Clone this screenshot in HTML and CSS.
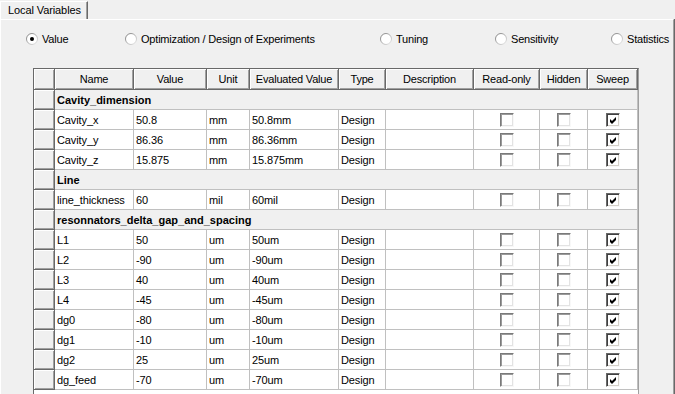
FILE: index.html
```html
<!DOCTYPE html>
<html>
<head>
<meta charset="utf-8">
<link rel="stylesheet" href="styles.css">
</head>
<body>
<div class="tabs"><div class="tab">Local Variables</div></div>
<div class="panel">
  <div class="radios">
    <label class="radio"><svg class="rb" width="12" height="12" viewBox="0 0 12 12"><defs><linearGradient id="rg" x1="0" y1="0" x2="1" y2="1"><stop offset="0" stop-color="#7a7a7a"/><stop offset="1" stop-color="#e8e8e8"/></linearGradient></defs><circle cx="6" cy="6" r="5.5" fill="#fff" stroke="url(#rg)"/><circle cx="6" cy="6" r="2" fill="#000"/></svg>Value</label>
    <label class="radio"><svg class="rb" width="12" height="12" viewBox="0 0 12 12"><circle cx="6" cy="6" r="5.5" fill="#fff" stroke="url(#rg)"/></svg>Optimization / Design of Experiments</label>
    <label class="radio"><svg class="rb" width="12" height="12" viewBox="0 0 12 12"><circle cx="6" cy="6" r="5.5" fill="#fff" stroke="url(#rg)"/></svg>Tuning</label>
    <label class="radio"><svg class="rb" width="12" height="12" viewBox="0 0 12 12"><circle cx="6" cy="6" r="5.5" fill="#fff" stroke="url(#rg)"/></svg>Sensitivity</label>
    <label class="radio"><svg class="rb" width="12" height="12" viewBox="0 0 12 12"><circle cx="6" cy="6" r="5.5" fill="#fff" stroke="url(#rg)"/></svg>Statistics</label>
  </div>
  <div class="grid">
    <table>
      <colgroup>
        <col class="c0"><col class="c1"><col class="c2"><col class="c3"><col class="c4"><col class="c5"><col class="c6"><col class="c7"><col class="c8"><col class="c9">
      </colgroup>
      <thead>
        <tr><th></th><th>Name</th><th>Value</th><th>Unit</th><th>Evaluated Value</th><th>Type</th><th>Description</th><th>Read-only</th><th>Hidden</th><th>Sweep</th></tr>
      </thead>
      <tbody>
        <tr class="grp"><td class="rh"></td><td colspan="9">Cavity_dimension</td></tr>
        <tr><td class="rh"></td><td>Cavity_x</td><td>50.8</td><td>mm</td><td>50.8mm</td><td>Design</td><td></td><td class="cb"><span class="box"></span></td><td class="cb"><span class="box"></span></td><td class="cb"><span class="box on"><svg width="11" height="11" viewBox="0 0 11 11"><path d="M2 4 L4 6 L8 2 L8 5 L4 9 L2 7 Z" fill="#000"/></svg></span></td></tr>
        <tr><td class="rh"></td><td>Cavity_y</td><td>86.36</td><td>mm</td><td>86.36mm</td><td>Design</td><td></td><td class="cb"><span class="box"></span></td><td class="cb"><span class="box"></span></td><td class="cb"><span class="box on"><svg width="11" height="11" viewBox="0 0 11 11"><path d="M2 4 L4 6 L8 2 L8 5 L4 9 L2 7 Z" fill="#000"/></svg></span></td></tr>
        <tr><td class="rh"></td><td>Cavity_z</td><td>15.875</td><td>mm</td><td>15.875mm</td><td>Design</td><td></td><td class="cb"><span class="box"></span></td><td class="cb"><span class="box"></span></td><td class="cb"><span class="box on"><svg width="11" height="11" viewBox="0 0 11 11"><path d="M2 4 L4 6 L8 2 L8 5 L4 9 L2 7 Z" fill="#000"/></svg></span></td></tr>
        <tr class="grp"><td class="rh"></td><td colspan="9">Line</td></tr>
        <tr><td class="rh"></td><td>line_thickness</td><td>60</td><td>mil</td><td>60mil</td><td>Design</td><td></td><td class="cb"><span class="box"></span></td><td class="cb"><span class="box"></span></td><td class="cb"><span class="box on"><svg width="11" height="11" viewBox="0 0 11 11"><path d="M2 4 L4 6 L8 2 L8 5 L4 9 L2 7 Z" fill="#000"/></svg></span></td></tr>
        <tr class="grp"><td class="rh"></td><td colspan="9">resonnators_delta_gap_and_spacing</td></tr>
        <tr><td class="rh"></td><td>L1</td><td>50</td><td>um</td><td>50um</td><td>Design</td><td></td><td class="cb"><span class="box"></span></td><td class="cb"><span class="box"></span></td><td class="cb"><span class="box on"><svg width="11" height="11" viewBox="0 0 11 11"><path d="M2 4 L4 6 L8 2 L8 5 L4 9 L2 7 Z" fill="#000"/></svg></span></td></tr>
        <tr><td class="rh"></td><td>L2</td><td>-90</td><td>um</td><td>-90um</td><td>Design</td><td></td><td class="cb"><span class="box"></span></td><td class="cb"><span class="box"></span></td><td class="cb"><span class="box on"><svg width="11" height="11" viewBox="0 0 11 11"><path d="M2 4 L4 6 L8 2 L8 5 L4 9 L2 7 Z" fill="#000"/></svg></span></td></tr>
        <tr><td class="rh"></td><td>L3</td><td>40</td><td>um</td><td>40um</td><td>Design</td><td></td><td class="cb"><span class="box"></span></td><td class="cb"><span class="box"></span></td><td class="cb"><span class="box on"><svg width="11" height="11" viewBox="0 0 11 11"><path d="M2 4 L4 6 L8 2 L8 5 L4 9 L2 7 Z" fill="#000"/></svg></span></td></tr>
        <tr><td class="rh"></td><td>L4</td><td>-45</td><td>um</td><td>-45um</td><td>Design</td><td></td><td class="cb"><span class="box"></span></td><td class="cb"><span class="box"></span></td><td class="cb"><span class="box on"><svg width="11" height="11" viewBox="0 0 11 11"><path d="M2 4 L4 6 L8 2 L8 5 L4 9 L2 7 Z" fill="#000"/></svg></span></td></tr>
        <tr><td class="rh"></td><td>dg0</td><td>-80</td><td>um</td><td>-80um</td><td>Design</td><td></td><td class="cb"><span class="box"></span></td><td class="cb"><span class="box"></span></td><td class="cb"><span class="box on"><svg width="11" height="11" viewBox="0 0 11 11"><path d="M2 4 L4 6 L8 2 L8 5 L4 9 L2 7 Z" fill="#000"/></svg></span></td></tr>
        <tr><td class="rh"></td><td>dg1</td><td>-10</td><td>um</td><td>-10um</td><td>Design</td><td></td><td class="cb"><span class="box"></span></td><td class="cb"><span class="box"></span></td><td class="cb"><span class="box on"><svg width="11" height="11" viewBox="0 0 11 11"><path d="M2 4 L4 6 L8 2 L8 5 L4 9 L2 7 Z" fill="#000"/></svg></span></td></tr>
        <tr><td class="rh"></td><td>dg2</td><td>25</td><td>um</td><td>25um</td><td>Design</td><td></td><td class="cb"><span class="box"></span></td><td class="cb"><span class="box"></span></td><td class="cb"><span class="box on"><svg width="11" height="11" viewBox="0 0 11 11"><path d="M2 4 L4 6 L8 2 L8 5 L4 9 L2 7 Z" fill="#000"/></svg></span></td></tr>
        <tr><td class="rh"></td><td>dg_feed</td><td>-70</td><td>um</td><td>-70um</td><td>Design</td><td></td><td class="cb"><span class="box"></span></td><td class="cb"><span class="box"></span></td><td class="cb"><span class="box on"><svg width="11" height="11" viewBox="0 0 11 11"><path d="M2 4 L4 6 L8 2 L8 5 L4 9 L2 7 Z" fill="#000"/></svg></span></td></tr>
      </tbody>
    </table>
  </div>
</div>
</body>
</html>
```
FILE: styles.css
```css
html, body {
  margin: 0;
  padding: 0;
  width: 675px;
  height: 394px;
  overflow: hidden;
  background: #f0f0f0;
  font-family: "Liberation Sans", Arial, sans-serif;
  font-size: 11px;
  color: #000;
}

.tabs {
  height: 19px;
  display: flex;
  align-items: flex-end;
}

.tab {
  box-sizing: border-box;
  width: 88px;
  height: 18px;
  padding: 2px 0 0 7px;
  border-top: 1px solid #fff;
  border-left: 1px solid #fff;
  border-right: 1px solid #696969;
  box-shadow: inset -1px 0 0 #a0a0a0;
  letter-spacing: -0.1px;
}

.panel {
  box-sizing: border-box;
  width: 674px;
  height: 375px;
  border-top: 1px solid #fff;
  border-left: 1px solid #fff;
  border-right: 1px solid #a0a0a0;
  box-shadow: 1px 0 0 #696969;
  padding-top: 13px;
}

.radios {
  display: grid;
  grid-template-columns: 99px 255px 115px 116px auto;
  padding-left: 25px;
  height: 12px;
  letter-spacing: -0.2px;
}

.radio {
  display: flex;
  align-items: center;
  gap: 4px;
  height: 12px;
  line-height: 12px;
}

.rb {
  flex: none;
}

.grid {
  box-sizing: border-box;
  margin-top: 23px;
  margin-left: 32px;
  width: 606px;
  height: 340px;
  background: #fff;
  border-top: 1px solid #696969;
  border-left: 1px solid #696969;
  border-right: 1px solid #a0a0a0;
}

table {
  table-layout: fixed;
  border-collapse: separate;
  border-spacing: 0;
  width: 604px;
}

.c0 { width: 21px; }
.c1 { width: 79px; }
.c2 { width: 73px; }
.c3 { width: 43px; }
.c4 { width: 89px; }
.c5 { width: 47px; }
.c6 { width: 88px; }
.c7 { width: 66px; }
.c8 { width: 48px; }
.c9 { width: 50px; }

th, td {
  box-sizing: border-box;
  padding: 0;
  white-space: nowrap;
  overflow: hidden;
}

th {
  height: 21px;
  font-weight: normal;
  text-align: center;
  background: #f0f0f0;
  border-right: 1px solid #696969;
  border-bottom: 1px solid #696969;
  box-shadow: inset 1px 1px 0 #fff, inset -1px -1px 0 #a0a0a0;
  letter-spacing: -0.2px;
}

td {
  height: 20px;
  padding-left: 2px;
  background: #fff;
  border-right: 1px solid #c0c0c0;
  border-bottom: 1px solid #c0c0c0;
  letter-spacing: -0.1px;
}

td.rh {
  padding: 0;
  background: #f0f0f0;
  border-right: 1px solid #696969;
  border-bottom: 1px solid #696969;
  box-shadow: inset 1px 1px 0 #fff, inset -1px -1px 0 #a0a0a0;
}

tr.grp td:not(.rh) {
  background: #f0f0f0;
  font-weight: bold;
  letter-spacing: 0;
}

td.cb {
  padding: 0;
  text-align: center;
  line-height: 0;
}

.box {
  display: inline-block;
  box-sizing: border-box;
  width: 14px;
  height: 14px;
  vertical-align: middle;
  background: #fff;
  border-top: 1px solid #7a7a7a;
  border-left: 1px solid #7a7a7a;
  border-right: 1px solid #f8f8f8;
  border-bottom: 1px solid #f8f8f8;
  box-shadow: inset 1px 1px 0 #9a9a9a, inset -1px -1px 0 #e3e3e3;
}

.box.on {
  border-top-color: #696969;
  border-left-color: #696969;
  box-shadow: inset 1px 1px 0 #404040, inset -1px -1px 0 #d4d0c8;
}

.box svg {
  display: block;
  margin: 1px 0 0 1px;
}
```
